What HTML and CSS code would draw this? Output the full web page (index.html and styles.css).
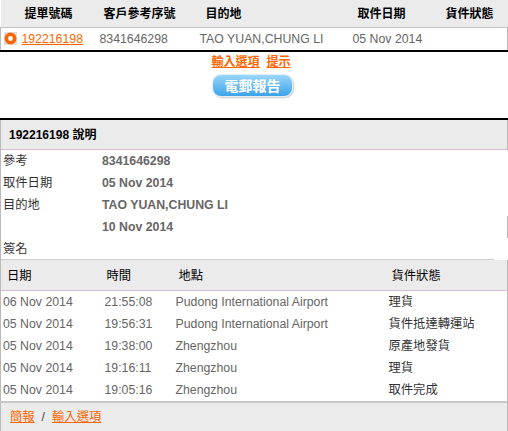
FILE: index.html
```html
<!DOCTYPE html>
<html lang="zh-Hant">
<head>
  <meta charset="UTF-8">
  <title>貨件追蹤</title>
  <link rel="stylesheet" href="styles.css">
</head>
<body>
  <table class="summary">
    <colgroup>
      <col class="c1"><col class="c2"><col class="c3"><col class="c4"><col class="c5">
    </colgroup>
    <thead>
      <tr>
        <th class="h1">提單號碼</th>
        <th class="h2">客戶參考序號</th>
        <th class="h3">目的地</th>
        <th class="h4">取件日期</th>
        <th class="h5">貨件狀態</th>
      </tr>
    </thead>
    <tbody>
      <tr>
        <td class="awb">
          <svg class="radio" width="13" height="13" viewBox="0 0 13 13">
            <rect width="13" height="13" fill="#d9e1ea"/>
            <circle cx="6.5" cy="6.5" r="6" fill="#ff6600"/>
            <circle cx="6.5" cy="6.5" r="2.4" fill="#fff"/>
          </svg>
          <a href="#">192216198</a>
        </td>
        <td>8341646298</td>
        <td>TAO YUAN,CHUNG LI</td>
        <td>05 Nov 2014</td>
        <td></td>
      </tr>
    </tbody>
  </table>

  <div class="actions">
    <div class="links"><a href="#">輸入選項</a><a href="#" class="tip">提示</a></div>
    <button class="mail">電郵報告</button>
  </div>

  <div class="detail">
    <div class="detail-head">192216198 說明</div>
    <div class="drow"><span class="lbl">參考</span><span class="val">8341646298</span></div>
    <div class="drow"><span class="lbl">取件日期</span><span class="val">05 Nov 2014</span></div>
    <div class="drow"><span class="lbl">目的地</span><span class="val">TAO YUAN,CHUNG LI</span></div>
    <div class="drow edge"><span class="lbl"></span><span class="val">10 Nov 2014</span></div>
    <div class="drow"><span class="lbl">簽名</span><span class="val"></span></div>
  </div>

  <table class="events">
    <colgroup>
      <col class="e1"><col class="e2"><col class="e3"><col class="e4">
    </colgroup>
    <thead>
      <tr><th>日期</th><th>時間</th><th>地點</th><th>貨件狀態</th></tr>
    </thead>
    <tbody>
      <tr><td>06 Nov 2014</td><td>21:55:08</td><td>Pudong International Airport</td><td>理貨</td></tr>
      <tr><td>05 Nov 2014</td><td>19:56:31</td><td>Pudong International Airport</td><td>貨件抵達轉運站</td></tr>
      <tr><td>05 Nov 2014</td><td>19:38:00</td><td>Zhengzhou</td><td>原產地發貨</td></tr>
      <tr><td>05 Nov 2014</td><td>19:16:11</td><td>Zhengzhou</td><td>理貨</td></tr>
      <tr><td>05 Nov 2014</td><td>19:05:16</td><td>Zhengzhou</td><td>取件完成</td></tr>
    </tbody>
  </table>

  <div class="foot"><a href="#">簡報</a><span class="sep">/</span><a href="#">輸入選項</a></div>
</body>
</html>
```

FILE: styles.css
```css
*{
  box-sizing: border-box;
  margin: 0;
  padding: 0;
}
body{
  width: 508px;
  font-family: "Liberation Sans", "Noto Sans CJK TC", sans-serif;
  font-size: 12.3px;
  color: #000;
  background: #fff;
}
a{
  color: #ff6600;
}
table{
  width: 100%;
  border-collapse: collapse;
  table-layout: fixed;
}

/* summary */
.summary .c1{ width: 95px; }
.summary .c2{ width: 100px; }
.summary .c3{ width: 153px; }
.summary .c4{ width: 80px; }
.summary th{
  height: 27px;
  background: #ebebeb;
  text-align: left;
  font-size: 12px;
  font-weight: bold;
  line-height: 14px;
  padding-top: 1px;
}
.summary .h1{ padding-left: 24px; }
.summary .h2{ padding-left: 8px; }
.summary .h3{ padding-left: 10px; }
.summary .h4{ padding-left: 9px; }
.summary .h5{ padding-left: 17px; }
.summary tbody tr{
  border-top: 1px solid #c9c2cb;
  border-bottom: 2px solid #000;
}
.summary td{
  height: 24px;
  color: #666;
  padding-left: 4px;
  line-height: 14px;
}
.summary td:first-child{ border-left: 1px solid #bbb; }
.summary td:last-child{ border-right: 1px solid #bbb; }
.summary .awb{
  padding-left: 3px;
  white-space: nowrap;
}
.radio{
  vertical-align: -2px;
  margin-right: 1px;
}

/* actions */
.actions{
  display: flex;
  flex-direction: column;
  align-items: center;
  padding-top: 2px;
  height: 68px;
  border-bottom: 2px solid #000;
}
.links{
  font-size: 12px;
  font-weight: bold;
  line-height: 16px;
  margin-left: -6px;
}
.links .tip{
  margin-left: 7px;
}
.mail{
  margin-top: 4px;
  width: 81px;
  height: 23px;
  border: 1px solid #e4eef6;
  border-radius: 9px;
  background: linear-gradient(#9ad6fb, #3aa4ea);
  box-shadow: 1px 1px 2px #c8c8c8;
  color: #fff;
  font-family: "Liberation Sans", "Noto Sans CJK TC", sans-serif;
  font-size: 14px;
  font-weight: bold;
  line-height: 18px;
  margin-left: -3px;
}

/* detail */
.detail{
  border-left: 1px solid #bbb;
}
.detail-head{
  height: 30px;
  line-height: 30px;
  padding-left: 8px;
  font-size: 12px;
  font-weight: bold;
  background: #ebebeb;
  border-right: 1px solid #bbb;
  border-bottom: 1px solid #d3bdd3;
}
.drow{
  display: flex;
  height: 22px;
  line-height: 22px;
}
.drow.edge{
  border-right: 1px solid #bbb;
}
.drow:last-child{
  margin-right: 14px;
  border-bottom: 1px solid #cfcfcf;
}
.lbl{
  width: 101px;
  padding-left: 2px;
  color: #333;
}
.val{
  font-weight: bold;
  color: #666;
}

/* events */
.events{
  border-left: 1px solid #bbb;
  border-right: 1px solid #bbb;
}
.events .e1{ width: 101px; }
.events .e2{ width: 72px; }
.events .e3{ width: 213px; }
.events th{
  height: 30px;
  background: #ebebeb;
  font-weight: normal;
  text-align: left;
  padding-left: 6px;
  border-bottom: 1px solid #d3bdd3;
}
.events th:nth-child(2){ padding-left: 5px; }
.events th:nth-child(3){ padding-left: 5px; }
.events th:nth-child(4){ padding-left: 5px; }
.events td{
  height: 22px;
  line-height: 22px;
  color: #666;
  padding-left: 2px;
  white-space: nowrap;
}
.events td:nth-child(2){ padding-left: 3px; }
.events td:nth-child(4){ padding-left: 2px; color: #333; }

/* footer */
.foot{
  height: 31px;
  line-height: 28px;
  padding-left: 9px;
  background: #ebebeb;
  border-top: 2px solid #c8c8c8;
  border-left: 1px solid #bbb;
  border-right: 1px solid #bbb;
  border-bottom: 1px solid #d3bdd3;
  color: #444;
}
.sep{
  margin: 0 7px;
}
```
